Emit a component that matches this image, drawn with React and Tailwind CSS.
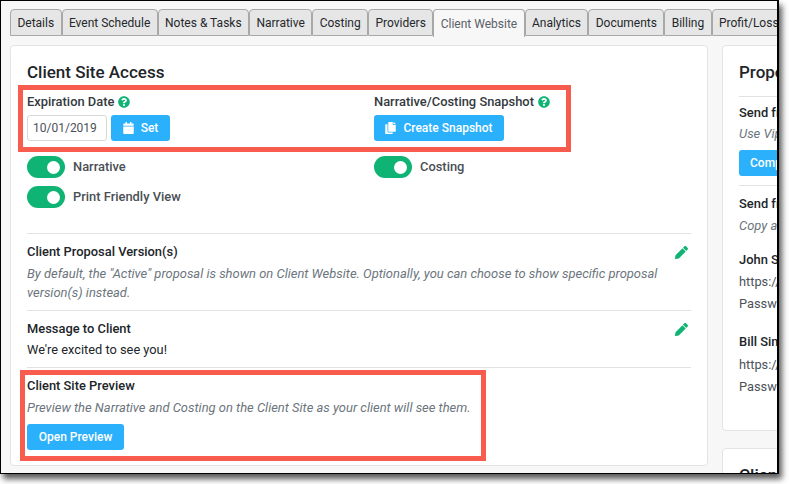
import React from 'react';

const tabs = ['Details', 'Event Schedule', 'Notes & Tasks', 'Narrative', 'Costing', 'Providers', 'Client Website', 'Analytics', 'Documents', 'Billing', 'Profit/Loss'];

const HelpIcon = () => (
  <svg className="w-[12px] h-[12px] ml-[4px] shrink-0" viewBox="0 0 512 512" fill="#0fb374">
    <path d="M504 256c0 137-111 248-248 248S8 393 8 256 119 8 256 8s248 111 248 248zM262.650 90c-54.500 0-89.260 22.960-116.550 63.770-3.540 5.290-2.350 12.410 2.720 16.260l34.700 26.310c5.200 3.950 12.620 3.010 16.670-2.120 17.870-22.660 30.120-35.800 57.300-35.800 20.430 0 45.690 13.150 45.690 32.960 0 14.980-12.360 22.670-32.540 33.980C247.130 238.530 216 254.940 216 296v4c0 6.630 5.370 12 12 12h56c6.630 0 12-5.370 12-12v-1.330c0-28.460 83.190-29.650 83.190-106.670 0-58-60.160-102-116.540-102zM256 338c-25.360 0-46 20.640-46 46 0 25.360 20.640 46 46 46s46-20.640 46-46c0-25.360-20.640-46-46-46z" />
  </svg>
);

const Toggle = () => (
  <span className="w-[38px] h-[22px] rounded-full bg-[#0fb374] flex items-center justify-end pr-[5px] shrink-0">
    <span className="w-[13px] h-[13px] rounded-full bg-white" />
  </span>
);

const Pencil = () => (
  <svg className="w-[13px] h-[13px] shrink-0" viewBox="0 0 512 512" fill="#0fb374">
    <path d="M497.900 142.100l-46.100 46.100c-4.700 4.700-12.300 4.700-17 0l-111-111c-4.700-4.700-4.700-12.300 0-17l46.100-46.100c18.700-18.700 49.100-18.700 67.900 0l60.100 60.100c18.800 18.700 18.800 49.100 0 67.900zM284.200 99.800L21.600 362.400.4 483.900c-2.900 16.400 11.400 30.600 27.800 27.800l121.500-21.300 262.600-262.600c4.700-4.700 4.700-12.300 0-17l-111-111c-4.800-4.700-12.400-4.700-17.100 0z" />
  </svg>
);

export default function App() {
  return (
    <div className="w-[789px] h-[484px] bg-white overflow-hidden font-['Roboto',sans-serif]">
      <div className="relative w-[779px] h-[474px] bg-[#f7f7f7] border border-black border-r-2 overflow-hidden shadow-[3px_5px_6px_rgba(0,0,0,0.65)]">
        <div className="flex pl-[9px] pt-[8px] h-[36px] w-[900px]">
          {tabs.map((t) => (
            <div
              key={t}
              className={
                t === 'Client Website'
                  ? 'h-[28px] px-[6.4px] flex items-center text-[12px] text-[#5a6067] bg-[#f7f7f7] border border-b-0 border-[#a8a8a8] rounded-t-[4px] whitespace-nowrap'
                  : 'h-[27px] px-[6.4px] flex items-center text-[12px] text-[#25282c] bg-[#e6e6e6] border border-[#a8a8a8] rounded-t-[4px] whitespace-nowrap'
              }
            >
              {t}
            </div>
          ))}
        </div>

        <div className="flex gap-[14px] pl-[9px] pt-[8px] w-[900px] items-start">
          <div className="w-[698px] h-[421px] shrink-0 bg-white border border-[#e4e4e4] rounded-[4px] pl-[16px] pr-[16px]">
            <h2 className="mt-[16px] text-[17px] leading-[20px] font-medium text-[#212529]">Client Site Access</h2>

            <div className="flex mt-[12px]">
              <div className="w-[347px]">
                <div className="flex items-center h-[16px] text-[12.9px] font-medium text-[#343a40]">
                  Expiration Date <HelpIcon />
                </div>
                <div className="flex gap-[4px] mt-[5px]">
                  <div className="w-[80px] h-[26px] border border-[#d8d8d8] rounded-[3px] flex items-center pl-[5px] text-[12px] text-[#4d5259]">10/01/2019</div>
                  <div className="w-[59px] h-[26px] bg-[#2bb0fb] rounded-[3px] flex items-center justify-center gap-[7px] text-[12px] font-medium text-white">
                    <svg className="w-[11px] h-[12px]" viewBox="0 0 448 512" fill="white">
                      <path d="M0 464c0 26.500 21.500 48 48 48h352c26.500 0 48-21.500 48-48V192H0v272zM400 64h-48V16c0-8.800-7.200-16-16-16h-32c-8.800 0-16 7.200-16 16v48H160V16c0-8.800-7.200-16-16-16h-32c-8.800 0-16 7.200-16 16v48H48C21.500 64 0 85.500 0 112v48h448v-48c0-26.500-21.500-48-48-48z" />
                    </svg>
                    Set
                  </div>
                </div>
              </div>
              <div>
                <div className="flex items-center h-[16px] text-[12.9px] font-medium text-[#343a40]">
                  Narrative/Costing Snapshot <HelpIcon />
                </div>
                <div className="mt-[5px] w-[130px] h-[26px] bg-[#2bb0fb] rounded-[3px] flex items-center justify-center gap-[7px] text-[12px] font-medium text-white">
                  <svg className="w-[11px] h-[12px]" viewBox="0 0 448 512" fill="white">
                    <path d="M320 448v40c0 13.300-10.700 24-24 24H24c-13.300 0-24-10.700-24-24V120c0-13.300 10.700-24 24-24h72v296c0 30.900 25.100 56 56 56h168zm0-344V0H152c-13.300 0-24 10.700-24 24v368c0 13.300 10.700 24 24 24h272c13.300 0 24-10.700 24-24V128H344c-13.200 0-24-10.800-24-24zm120.970-31.030L375.030 7.030A24 24 0 0 0 358.060 0H352v96h96v-6.060a24 24 0 0 0-7.030-16.970z" />
                  </svg>
                  Create Snapshot
                </div>
              </div>
            </div>

            <div className="flex mt-[15px]">
              <div className="w-[347px]">
                <div className="flex items-center gap-[8px] text-[12.9px] leading-[16px] font-medium text-[#4a4f55]">
                  <Toggle /> <span>Narrative</span>
                </div>
                <div className="flex items-center gap-[8px] mt-[8px] text-[12.9px] leading-[16px] font-medium text-[#4a4f55]">
                  <Toggle /> <span>Print Friendly View</span>
                </div>
              </div>
              <div className="flex items-center h-[22px] gap-[8px] text-[12.9px] leading-[16px] font-medium text-[#4a4f55]">
                <Toggle /> <span>Costing</span>
              </div>
            </div>

            <div className="mt-[25px] border-t border-[#e2e2e2] pt-[10px] pb-[9px] h-[77px]">
              <div className="flex justify-between items-center pr-[3px] h-[16px]">
                <span className="text-[12.9px] font-medium text-[#212529]">Client Proposal Version(s)</span>
                <Pencil />
              </div>
              <p className="mt-[4px] text-[12.95px] leading-[19px] italic text-[#6c757d]">
                By default, the "Active" proposal is shown on Client Website. Optionally, you can choose to show specific proposal version(s) instead.
              </p>
            </div>

            <div className="border-t border-[#e2e2e2] pt-[10px] h-[57px]">
              <div className="flex justify-between items-center pr-[3px] h-[16px]">
                <span className="text-[12.9px] font-medium text-[#212529]">Message to Client</span>
                <Pencil />
              </div>
              <p className="mt-[3px] text-[12.8px] leading-[19px] text-[#212529]">We're excited to see you!</p>
            </div>

            <div className="border-t border-[#e2e2e2] pt-[10px]">
              <div className="text-[12.9px] leading-[16px] font-medium text-[#212529]">Client Site Preview</div>
              <p className="mt-[4px] text-[12.95px] leading-[19px] italic text-[#6c757d]">
                Preview the Narrative and Costing on the Client Site as your client will see them.
              </p>
              <div className="mt-[7px] w-[97px] h-[26px] bg-[#2bb0fb] rounded-[3px] flex items-center justify-center text-[12px] font-medium text-white">
                Open Preview
              </div>
            </div>
          </div>

          <div className="w-[200px] shrink-0 flex flex-col gap-[17px]">
            <div className="h-[386px] bg-white border border-[#e4e4e4] rounded-[4px] pl-[16px]">
              <h2 className="mt-[16px] text-[17px] leading-[20px] font-medium text-[#212529]">Proposal</h2>
              <div className="mt-[14px] border-t border-[#e2e2e2] pt-[8px] w-[180px]">
                <div className="text-[12.9px] leading-[16px] font-medium text-[#212529]">Send from</div>
                <p className="mt-[3px] text-[12.95px] leading-[19px] italic text-[#6c757d]">Use Vipe</p>
                <div className="mt-[7px] w-[80px] h-[26px] bg-[#2bb0fb] rounded-[3px] pl-[11px] flex items-center text-[12px] font-medium text-white">Compose</div>
              </div>
              <div className="mt-[9px] border-t border-[#e2e2e2] pt-[10px] w-[180px]">
                <div className="text-[12.9px] leading-[16px] font-medium text-[#212529]">Send from</div>
                <p className="mt-[4px] text-[12.95px] leading-[19px] italic text-[#6c757d]">Copy and</p>
              </div>
              <div className="mt-[17px] text-[12.9px] font-medium leading-[16px] text-[#212529]">John Smith</div>
              <div className="mt-[4px] text-[12.8px] leading-[19px] text-[#4d5259]">https://</div>
              <div className="mt-[3px] text-[12.8px] leading-[19px] text-[#4d5259]">Password</div>
              <div className="mt-[21px] text-[12.9px] font-medium leading-[16px] text-[#212529]">Bill Simon</div>
              <div className="mt-[5px] text-[12.8px] leading-[19px] text-[#4d5259]">https://</div>
              <div className="mt-[3px] text-[12.8px] leading-[19px] text-[#4d5259]">Password</div>
            </div>
            <div className="h-[60px] bg-white border border-[#e4e4e4] rounded-[4px] pl-[16px]">
              <h2 className="mt-[16px] text-[17px] leading-[20px] font-medium text-[#212529]">Client</h2>
            </div>
          </div>
        </div>

        {/* red callouts drawn over the shot */}
        <div className="absolute left-[17px] top-[84px] w-[553px] h-[67px] border-[5px] border-[#f75c4e]" />
        <div className="absolute left-[19px] top-[369px] w-[466px] h-[91px] border-[5px] border-[#f75c4e]" />
      </div>
    </div>
  );
}
